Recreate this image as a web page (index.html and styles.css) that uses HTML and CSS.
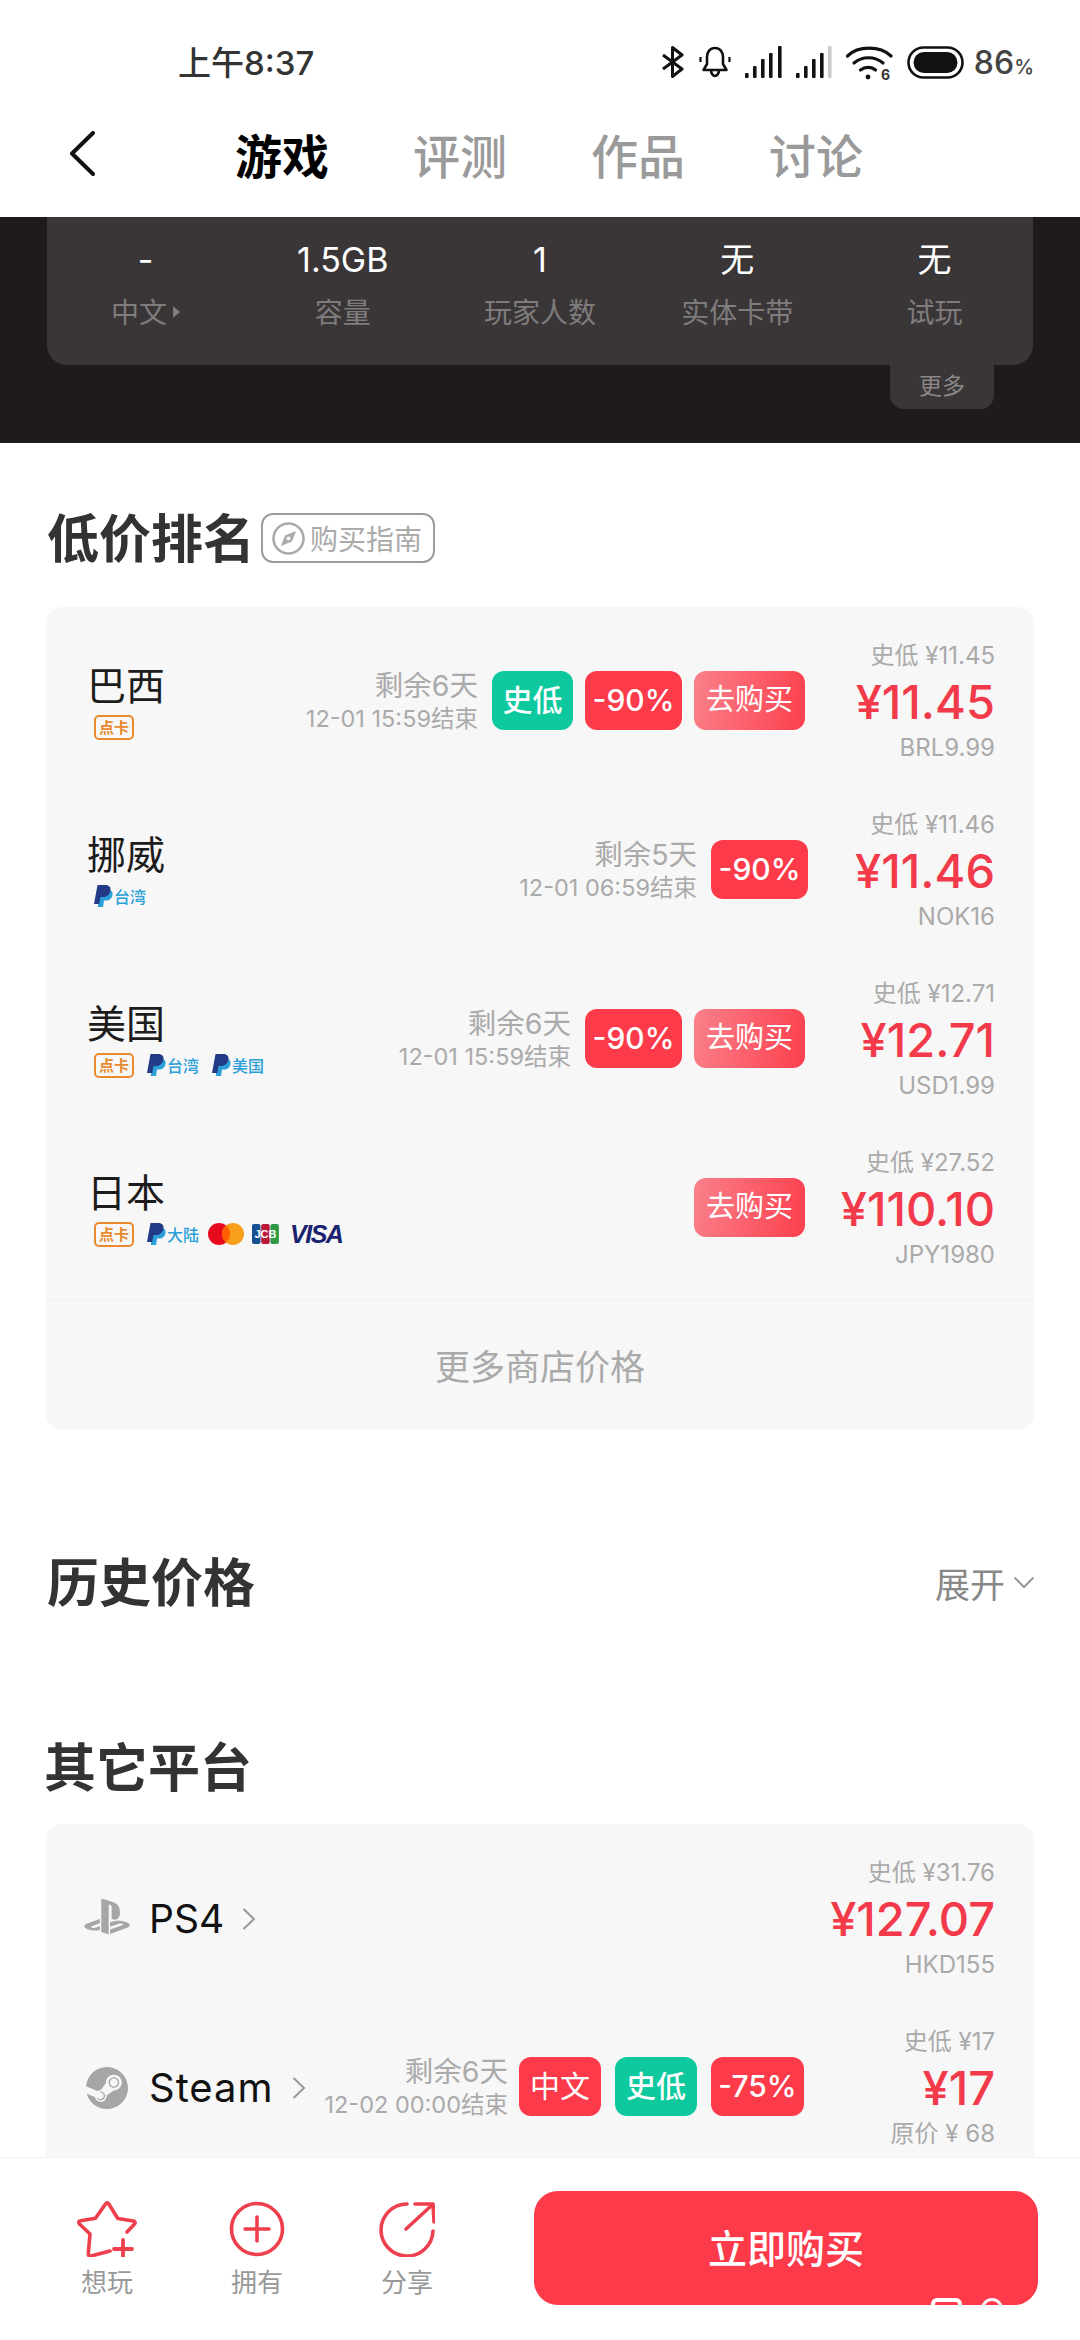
FILE: index.html
```html
<!DOCTYPE html>
<html lang="zh-CN">
<head>
  <meta charset="UTF-8">
  <meta name="viewport" content="width=device-width, initial-scale=1.0">
  <title>游戏</title>
  <link rel="stylesheet" href="styles.css">
</head>
<body>
  <svg class="defs" width="0" height="0" aria-hidden="true">
    <symbol id="paypal" viewBox="0 0 19 22">
      <path fill="#2a9fd8" d="M6 5h8c4 0 5 2.500 4.500 5-.6 3.500-3 5.500-6.500 5.500H10L9 22H3.800z"/>
      <path fill="#233a86" d="M3.500 0h7.500c4.500 0 6 2.500 5.500 5.500-.7 4-3.500 6.500-7.500 6.500H6.500L5.200 19H0z"/>
    </symbol>
    <symbol id="chevron" viewBox="0 0 14 24">
      <path fill="none" stroke="#999" stroke-width="2" d="M1.500 2l10.500 10L1.500 22"/>
    </symbol>
  </svg>

  <div class="phone">
    <div class="status-bar">
      <span class="status-time">上午8:37</span>
      <div class="status-icons">
        <svg width="24" height="32" viewBox="0 0 24 32"><path fill="none" stroke="#111" stroke-width="3" stroke-linejoin="round" d="M2 9l19 14-9.500 7.500V1.500L21 9 2 23"/></svg>
        <svg width="32" height="32" viewBox="0 0 32 32"><path fill="none" stroke="#111" stroke-width="2.600" stroke-linejoin="round" d="M16 2c-5 0-8 4-8 9v7l-3.500 6h23L24 18v-7c0-5-3-9-8-9zM12 24c0 3.500 2 6 4 6s4-2.500 4-6"/><path stroke="#111" stroke-width="2.200" d="M1.500 11v5M30.500 11v5"/></svg>
        <svg width="37" height="32" viewBox="0 0 37 32"><g fill="#111"><rect x="0" y="27" width="3.600" height="5" rx="1"/><rect x="8" y="20" width="3.600" height="12" rx="1"/><rect x="16" y="13" width="3.600" height="19" rx="1"/><rect x="24" y="7" width="3.600" height="25" rx="1"/><rect x="33" y="0" width="3.600" height="32" rx="1"/></g></svg>
        <svg width="36" height="32" viewBox="0 0 36 32"><g fill="#111"><rect x="0" y="27" width="3.600" height="5" rx="1"/><rect x="8" y="20" width="3.600" height="12" rx="1"/><rect x="16" y="13" width="3.600" height="19" rx="1"/><rect x="24" y="7" width="3.600" height="25" rx="1"/></g><rect x="32" y="0" width="3.600" height="32" rx="1" fill="#ccc"/></svg>
        <svg class="wifi" width="50" height="40" viewBox="0 0 50 40"><g fill="none" stroke="#111" stroke-width="3.200" stroke-linecap="round"><path d="M1.500 10C12-.5 34-.5 45 10"/><path d="M8 17c8-7 21-7 29 0"/><path d="M14.500 24c4.500-3.500 11-3.500 15 0"/></g><circle cx="22" cy="31" r="2.400" fill="#111"/><text x="35" y="34" class="wifi-num">6</text></svg>
        <svg class="battery" width="57" height="33" viewBox="0 0 57 33"><rect x="1.500" y="1.500" width="54" height="30" rx="15" fill="none" stroke="#111" stroke-width="2.600"/><rect x="6.500" y="6" width="44" height="21" rx="10.500" fill="#111"/></svg>
        <span class="status-batt">86<small>%</small></span>
      </div>
    </div>

    <nav class="nav">
      <svg class="nav-back" width="26" height="45" viewBox="0 0 26 45"><path fill="none" stroke="#111" stroke-width="4" stroke-linecap="round" stroke-linejoin="round" d="M24 2L3 22.500 24 43"/></svg>
      <div class="nav-tabs">
        <span class="tab active">游戏</span>
        <span class="tab">评测</span>
        <span class="tab">作品</span>
        <span class="tab">讨论</span>
      </div>
    </nav>

    <main class="content">
      <section class="dark-band">
        <div class="info-card">
          <div class="info-cell"><div class="info-val">-</div><div class="info-label">中文<i class="tri"></i></div></div>
          <div class="info-cell"><div class="info-val">1.5GB</div><div class="info-label">容量</div></div>
          <div class="info-cell"><div class="info-val">1</div><div class="info-label">玩家人数</div></div>
          <div class="info-cell"><div class="info-val">无</div><div class="info-label">实体卡带</div></div>
          <div class="info-cell"><div class="info-val">无</div><div class="info-label">试玩</div></div>
        </div>
        <div class="more-tab">更多</div>
      </section>

      <div class="sec-head first">
        <h2>低价排名</h2>
        <span class="guide">
          <svg width="33" height="33" viewBox="0 0 33 33"><circle cx="16.500" cy="16.500" r="15" fill="none" stroke="#aaa" stroke-width="2.600"/><path fill="#aaa" d="M24 9l-4 10.500L9 24l4-10.500z"/><circle cx="16.500" cy="16.500" r="2" fill="#f7f7f7"/></svg>
          购买指南
        </span>
      </div>

      <div class="card">
        <div class="row">
          <div class="store">
            <div class="store-name">巴西</div>
            <div class="pays"><span class="point">点卡</span></div>
          </div>
          <div class="deal">
            <div class="time"><div class="left">剩余6天</div><div class="end">12-01 15:59结束</div></div>
            <span class="tag low">史低</span>
            <span class="tag off">-90%</span>
            <span class="tag buy">去购买</span>
          </div>
          <div class="price"><div class="sub">史低 ¥11.45</div><div class="now">¥11.45</div><div class="sub">BRL9.99</div></div>
        </div>

        <div class="row">
          <div class="store">
            <div class="store-name">挪威</div>
            <div class="pays"><span class="pp"><svg width="19" height="22"><use href="#paypal"/></svg>台湾</span></div>
          </div>
          <div class="deal">
            <div class="time"><div class="left">剩余5天</div><div class="end">12-01 06:59结束</div></div>
            <span class="tag off last">-90%</span>
          </div>
          <div class="price"><div class="sub">史低 ¥11.46</div><div class="now">¥11.46</div><div class="sub">NOK16</div></div>
        </div>

        <div class="row">
          <div class="store">
            <div class="store-name">美国</div>
            <div class="pays">
              <span class="point">点卡</span>
              <span class="pp"><svg width="19" height="22"><use href="#paypal"/></svg>台湾</span>
              <span class="pp"><svg width="19" height="22"><use href="#paypal"/></svg>美国</span>
            </div>
          </div>
          <div class="deal">
            <div class="time"><div class="left">剩余6天</div><div class="end">12-01 15:59结束</div></div>
            <span class="tag off">-90%</span>
            <span class="tag buy">去购买</span>
          </div>
          <div class="price"><div class="sub">史低 ¥12.71</div><div class="now">¥12.71</div><div class="sub">USD1.99</div></div>
        </div>

        <div class="row">
          <div class="store">
            <div class="store-name">日本</div>
            <div class="pays">
              <span class="point">点卡</span>
              <span class="pp"><svg width="19" height="22"><use href="#paypal"/></svg>大陆</span>
              <svg class="mc" width="36" height="22" viewBox="0 0 36 22"><circle cx="11" cy="11" r="11" fill="#e50a1e"/><circle cx="25" cy="11" r="11" fill="#f79e1b"/><path fill="#ff5f00" d="M18 2.500a11 11 0 0 1 0 17 11 11 0 0 1 0-17z"/></svg>
              <svg class="jcb" width="27" height="20" viewBox="0 0 27 20"><rect x="0" y="0" width="8.500" height="20" rx="2" fill="#14508f"/><rect x="9.200" y="0" width="8.500" height="20" rx="2" fill="#b81738"/><rect x="18.400" y="0" width="8.500" height="20" rx="2" fill="#2f9a43"/><text x="13.500" y="14" class="jcb-text">JCB</text></svg>
              <span class="visa">VISA</span>
            </div>
          </div>
          <div class="deal">
            <span class="tag buy">去购买</span>
          </div>
          <div class="price"><div class="sub">史低 ¥27.52</div><div class="now">¥110.10</div><div class="sub">JPY1980</div></div>
        </div>

        <div class="card-foot">更多商店价格</div>
      </div>

      <div class="sec-head history">
        <h2>历史价格</h2>
        <span class="expand">展开
          <svg width="22" height="13" viewBox="0 0 22 13"><path fill="none" stroke="#999" stroke-width="2" d="M1.500 1.500L11 11l9.500-9.500"/></svg>
        </span>
      </div>

      <div class="sec-head other">
        <h2>其它平台</h2>
      </div>

      <div class="card card-clip">
        <div class="row">
          <div class="platform">
            <svg class="plat-icon ps" width="46" height="38" viewBox="0 0 24 20"><g transform="translate(0 -2.200)"><path fill="#a6a6a6" d="M8.984 2.596v17.547l3.915 1.261V6.688c0-.69.304-1.151.794-.991.636.18.76.814.76 1.505v5.875c2.441 1.193 4.362-.002 4.362-3.152 0-3.237-1.126-4.675-4.438-5.827-1.307-.448-3.728-1.186-5.39-1.502zm4.656 16.241l6.296-2.275c.715-.258.826-.625.246-.818-.586-.192-1.637-.139-2.357.123l-4.205 1.500V14.980l.24-.085s1.201-.42 2.913-.615c1.696-.18 3.785.03 5.437.661 1.848.601 2.040 1.472 1.576 2.072-.465.6-1.622 1.036-1.622 1.036l-8.544 3.107V18.860zM1.807 18.600c-1.900-.545-2.214-1.668-1.352-2.320.801-.586 2.160-1.052 2.160-1.052l5.615-2.013v2.313L4.205 17c-.705.271-.825.632-.239.826.586.195 1.637.150 2.343-.12L8.247 17v2.074c-.12.03-.256.044-.39.073-1.939.331-3.996.196-6.038-.479z"/></g></svg>
            <span class="plat-name">PS4</span>
            <svg class="plat-arrow" width="14" height="24"><use href="#chevron"/></svg>
          </div>
          <div class="deal"></div>
          <div class="price"><div class="sub">史低 ¥31.76</div><div class="now">¥127.07</div><div class="sub">HKD155</div></div>
        </div>

        <div class="row">
          <div class="platform">
            <svg class="plat-icon" width="46" height="42" viewBox="-1 0 26 24"><path fill="#a6a6a6" d="M11.979 0C5.678 0 .511 4.860.022 11.037l6.432 2.658c.545-.371 1.203-.59 1.912-.59.063 0 .125.004.188.006l2.861-4.142V8.910c0-2.495 2.028-4.524 4.524-4.524 2.494 0 4.524 2.031 4.524 4.527s-2.030 4.525-4.524 4.525h-.105l-4.076 2.911c0 .052.004.105.004.159 0 1.875-1.515 3.396-3.390 3.396-1.635 0-3.016-1.173-3.331-2.727L.436 15.270C1.862 20.307 6.486 24 11.979 24c6.627 0 11.999-5.373 11.999-12S18.605 0 11.979 0zM7.540 18.210l-1.473-.61c.262.543.714.999 1.314 1.250 1.297.539 2.793-.076 3.332-1.375.263-.63.264-1.319.005-1.949s-.75-1.121-1.377-1.383c-.624-.26-1.290-.249-1.878-.03l1.523.63c.956.4 1.409 1.500 1.009 2.455-.397.957-1.497 1.410-2.454 1.012H7.540zm11.415-9.303c0-1.662-1.353-3.015-3.015-3.015-1.665 0-3.015 1.353-3.015 3.015 0 1.665 1.350 3.015 3.015 3.015 1.663 0 3.015-1.350 3.015-3.015zm-5.273-.005c0-1.252 1.013-2.266 2.265-2.266 1.249 0 2.266 1.014 2.266 2.266 0 1.251-1.017 2.265-2.266 2.265-1.253 0-2.265-1.014-2.265-2.265z"/></svg>
            <span class="plat-name steam">Steam</span>
            <svg class="plat-arrow" width="14" height="24"><use href="#chevron"/></svg>
          </div>
          <div class="deal small">
            <div class="time"><div class="left">剩余6天</div><div class="end">12-02 00:00结束</div></div>
            <span class="tag off cn">中文</span>
            <span class="tag low">史低</span>
            <span class="tag off sale">-75%</span>
          </div>
          <div class="price"><div class="sub">史低 ¥17</div><div class="now">¥17</div><div class="sub">原价 ¥ 68</div></div>
        </div>
      </div>
    </main>

    <footer class="bottom-bar">
      <div class="action">
        <svg width="60" height="56" viewBox="0 0 60 56"><g fill="none" stroke="#ee3f4d" stroke-width="3.600" stroke-linecap="round" stroke-linejoin="round"><path d="M33 50l-19 5c-2 .4-3-.8-2.700-2.500L13 33 2.500 23c-1.400-1.500-.8-3 1-3.300l15-2.500L28.500 3c1-1.500 2.400-1.500 3.300 0l9 14.500 15.500 2.500c1.800.3 2.400 1.800 1 3.200L50 31"/><path stroke-width="3.800" d="M37 48h18M46 39v17"/></g></svg>
        <span>想玩</span>
      </div>
      <div class="action">
        <svg width="56" height="56" viewBox="0 0 56 56"><g fill="none" stroke="#ee3f4d" stroke-width="3.600" stroke-linecap="round"><circle cx="28" cy="28" r="25.500"/><path d="M16 28h24M28 16v24"/></g></svg>
        <span>拥有</span>
      </div>
      <div class="action">
        <svg width="56" height="56" viewBox="0 0 56 56"><g fill="none" stroke="#ee3f4d" stroke-width="3.600" stroke-linecap="round" stroke-linejoin="round"><path d="M54 30A26 26 0 1 1 28 3"/><path d="M27 28L52 5"/><path d="M36 3h18l1 18"/></g></svg>
        <span>分享</span>
      </div>
      <button class="buy-now">立即购买</button>
      <div class="watermark"><i class="wm-box"></i><i class="wm-dot"></i></div>
    </footer>
  </div>
</body>
</html>
```

FILE: styles.css
```css
* {
  box-sizing: border-box;
}
html, body {
  margin: 0;
  padding: 0;
  background: #fff;
}
body {
  font-family: Inter, "Noto Sans CJK SC", sans-serif;
  color: #222;
}
.defs {
  position: absolute;
}
.phone {
  width: 1080px;
  height: 2340px;
  display: flex;
  flex-direction: column;
  overflow: hidden;
  position: relative;
}

/* status bar */
.status-bar {
  height: 84px;
  flex: none;
  display: flex;
  align-items: flex-start;
  justify-content: space-between;
  padding: 44px 46px 0 178px;
}
.status-time {
  font-size: 33px;
  line-height: 38px;
  color: #333;
  font-weight: 500;
}
.status-icons {
  display: flex;
  align-items: flex-start;
  gap: 14px;
  margin-top: 2px;
}
.wifi {
  margin-right: -3px;
}
.wifi-num {
  font-family: Inter, sans-serif;
  font-size: 14px;
  font-weight: 700;
  fill: #333;
}
.status-batt {
  font-size: 32px;
  line-height: 34px;
  color: #444;
  font-weight: 500;
  margin-left: -4px;
}
.status-batt small {
  font-size: 20px;
}

/* top tabs */
.nav {
  height: 133px;
  flex: none;
  position: relative;
  display: flex;
  align-items: center;
  padding-top: 13px;
}
.nav-back {
  position: absolute;
  left: 69px;
  top: 47px;
}
.nav-tabs {
  display: flex;
  gap: 84px;
  margin-left: 235px;
}
.tab {
  font-size: 47px;
  line-height: 60px;
  font-weight: 500;
  color: #9a9a9a;
}
.tab.active {
  color: #000;
  font-weight: 700;
}

.content {
  flex: 1;
  overflow: hidden;
}

/* dark header band */
.dark-band {
  height: 226px;
  background: #1f1b1c;
  padding: 0 47px;
}
.info-card {
  height: 148px;
  background: #3a3637;
  border-radius: 0 0 20px 20px;
  display: grid;
  grid-template-columns: repeat(5, 1fr);
  padding-top: 23px;
}
.info-cell {
  text-align: center;
}
.info-val {
  font-size: 34px;
  line-height: 40px;
  color: #fff;
}
.info-label {
  font-size: 28px;
  line-height: 40px;
  margin-top: 13px;
  color: #7f7c7d;
}
.tri {
  display: inline-block;
  border-left: 7px solid #7f7c7d;
  border-top: 6px solid transparent;
  border-bottom: 6px solid transparent;
  margin-left: 6px;
  vertical-align: 5px;
}
.more-tab {
  width: 104px;
  height: 44px;
  margin-left: 843px;
  background: #3a3637;
  border-radius: 0 0 14px 14px;
  font-size: 23px;
  line-height: 42px;
  text-align: center;
  color: #8a8788;
}

/* section heads */
.sec-head {
  display: flex;
  align-items: center;
  height: 70px;
  padding: 0 47px;
}
.sec-head h2 {
  margin: 4px 0 0;
  font-size: 52px;
  line-height: 70px;
  font-weight: 700;
  color: #333;
}
.sec-head.first {
  margin-top: 60px;
  margin-bottom: 34px;
}
.sec-head.history {
  margin-top: 117px;
  justify-content: space-between;
}
.sec-head.other {
  margin-top: 115px;
  margin-bottom: 22px;
  padding-left: 44px;
}
.guide {
  display: flex;
  align-items: center;
  gap: 5px;
  height: 50px;
  width: 174px;
  margin-left: 6px;
  padding-left: 9px;
  border: 2px solid #9c9c9c;
  border-radius: 12px;
  font-size: 28px;
  color: #aaa;
  white-space: nowrap;
}
.expand {
  display: flex;
  align-items: center;
  gap: 8px;
  font-size: 35px;
  color: #888;
  margin-right: -2px;
}

/* price cards */
.card {
  margin: 0 46px;
  background: #f7f7f7;
  border-radius: 16px;
  padding-top: 10px;
}
.card-clip {
  border-radius: 16px 16px 0 0;
}
.row {
  height: 169px;
  display: flex;
  align-items: center;
  padding-left: 41px;
  padding-right: 39px;
}
.store-name {
  font-size: 39px;
  line-height: 46px;
  font-weight: 400;
  color: #1c1c1c;
}
.pays {
  display: flex;
  align-items: center;
  gap: 13px;
  height: 26px;
  margin-top: 5px;
  padding-left: 7px;
}
.point {
  width: 40px;
  height: 25px;
  border: 2px solid #e98a2f;
  border-radius: 5px;
  font-size: 15px;
  line-height: 21px;
  font-weight: 700;
  text-align: center;
  color: #e98a2f;
}
.pp {
  display: flex;
  align-items: center;
  gap: 1px;
  font-size: 16px;
  font-weight: 500;
  color: #2a9fd8;
  white-space: nowrap;
}
.pp svg {
  display: block;
}
.mc {
  margin-left: -4px;
}
.jcb-text {
  font-family: "Liberation Sans", sans-serif;
  font-size: 11px;
  font-weight: 700;
  text-anchor: middle;
  fill: #fff;
}
.jcb {
  margin-left: -5px;
}
.visa {
  font-family: "Liberation Sans", sans-serif;
  font-size: 25px;
  line-height: 26px;
  font-style: italic;
  font-weight: 700;
  letter-spacing: -1.500px;
  color: #1a2270;
  margin-left: -2px;
}
.deal {
  flex: 1;
  display: flex;
  align-items: center;
  justify-content: flex-end;
  gap: 12px;
  padding-right: 5px;
  margin-top: -2px;
}
.time {
  text-align: right;
  margin-right: 2px;
  white-space: nowrap;
}
.left {
  font-size: 28.500px;
  line-height: 35px;
  color: #aaa;
}
.end {
  font-size: 23.500px;
  line-height: 31px;
  color: #aaa;
}
.tag {
  height: 59px;
  border-radius: 12px;
  font-size: 30px;
  line-height: 58px;
  font-weight: 500;
  text-align: center;
  color: #fff;
  white-space: nowrap;
}
.low {
  width: 81px;
  background: #0dc99d;
}
.off {
  width: 97px;
  background: #fd3a4a;
}
.off.last {
  margin-right: -3px;
}
.buy {
  width: 111px;
  background: linear-gradient(100deg, #f9818a, #fd3f4e);
  font-weight: 400;
  font-size: 29px;
}
.small {
  gap: 14px;
  padding-right: 6px;
}
.small .time {
  margin-right: -3px;
}
.small .cn {
  width: 82px;
  font-weight: 400;
}
.small .low {
  width: 82px;
}
.small .sale {
  width: 93px;
}
.price {
  width: 185px;
  flex: none;
  text-align: right;
  white-space: nowrap;
  display: flex;
  flex-direction: column;
  align-items: flex-end;
}
.sub {
  font-size: 24px;
  line-height: 30px;
  color: #aaa;
}
.now {
  font-size: 47px;
  line-height: 62px;
  font-weight: 500;
  color: #f23a4b;
}
.card-foot {
  margin-top: 7px;
  height: 130px;
  border-top: 1px solid #efefef;
  text-align: center;
  font-size: 35px;
  line-height: 132px;
  color: #aaa;
}

/* other platforms */
.platform {
  display: flex;
  align-items: center;
  flex: none;
}
.plat-icon {
  margin-left: -3px;
}
.plat-icon.ps {
  margin-top: -4px;
}
.plat-name {
  font-size: 39px;
  color: #111;
  margin-left: 19px;
}
.plat-name.steam {
  font-size: 40px;
  letter-spacing: 1px;
}
.plat-arrow {
  margin-left: 18px;
}

/* bottom bar */
.bottom-bar {
  height: 183px;
  flex: none;
  position: relative;
  display: flex;
  align-items: flex-start;
  padding-left: 32px;
  background: #fff;
  border-top: 1px solid #f2f2f2;
}
.action {
  width: 150px;
  padding-top: 43px;
  display: flex;
  flex-direction: column;
  align-items: center;
  font-size: 26px;
  color: #999;
}
.action span {
  margin-top: 8px;
  line-height: 36px;
}
.buy-now {
  width: 504px;
  height: 114px;
  margin-top: 33px;
  margin-left: 52px;
  border: none;
  border-radius: 24px;
  background: #fd3a4a;
  font-family: inherit;
  font-size: 39px;
  font-weight: 500;
  color: #fff;
  padding-bottom: 6px;
}
.watermark {
  position: absolute;
  left: 931px;
  top: 140px;
  display: flex;
  gap: 19px;
}
.wm-box {
  width: 31px;
  height: 30px;
  border: 4px solid #fff;
  border-radius: 6px;
}
.wm-dot {
  width: 22px;
  height: 22px;
  border: 3px solid #fff;
  border-radius: 50%;
}
```
